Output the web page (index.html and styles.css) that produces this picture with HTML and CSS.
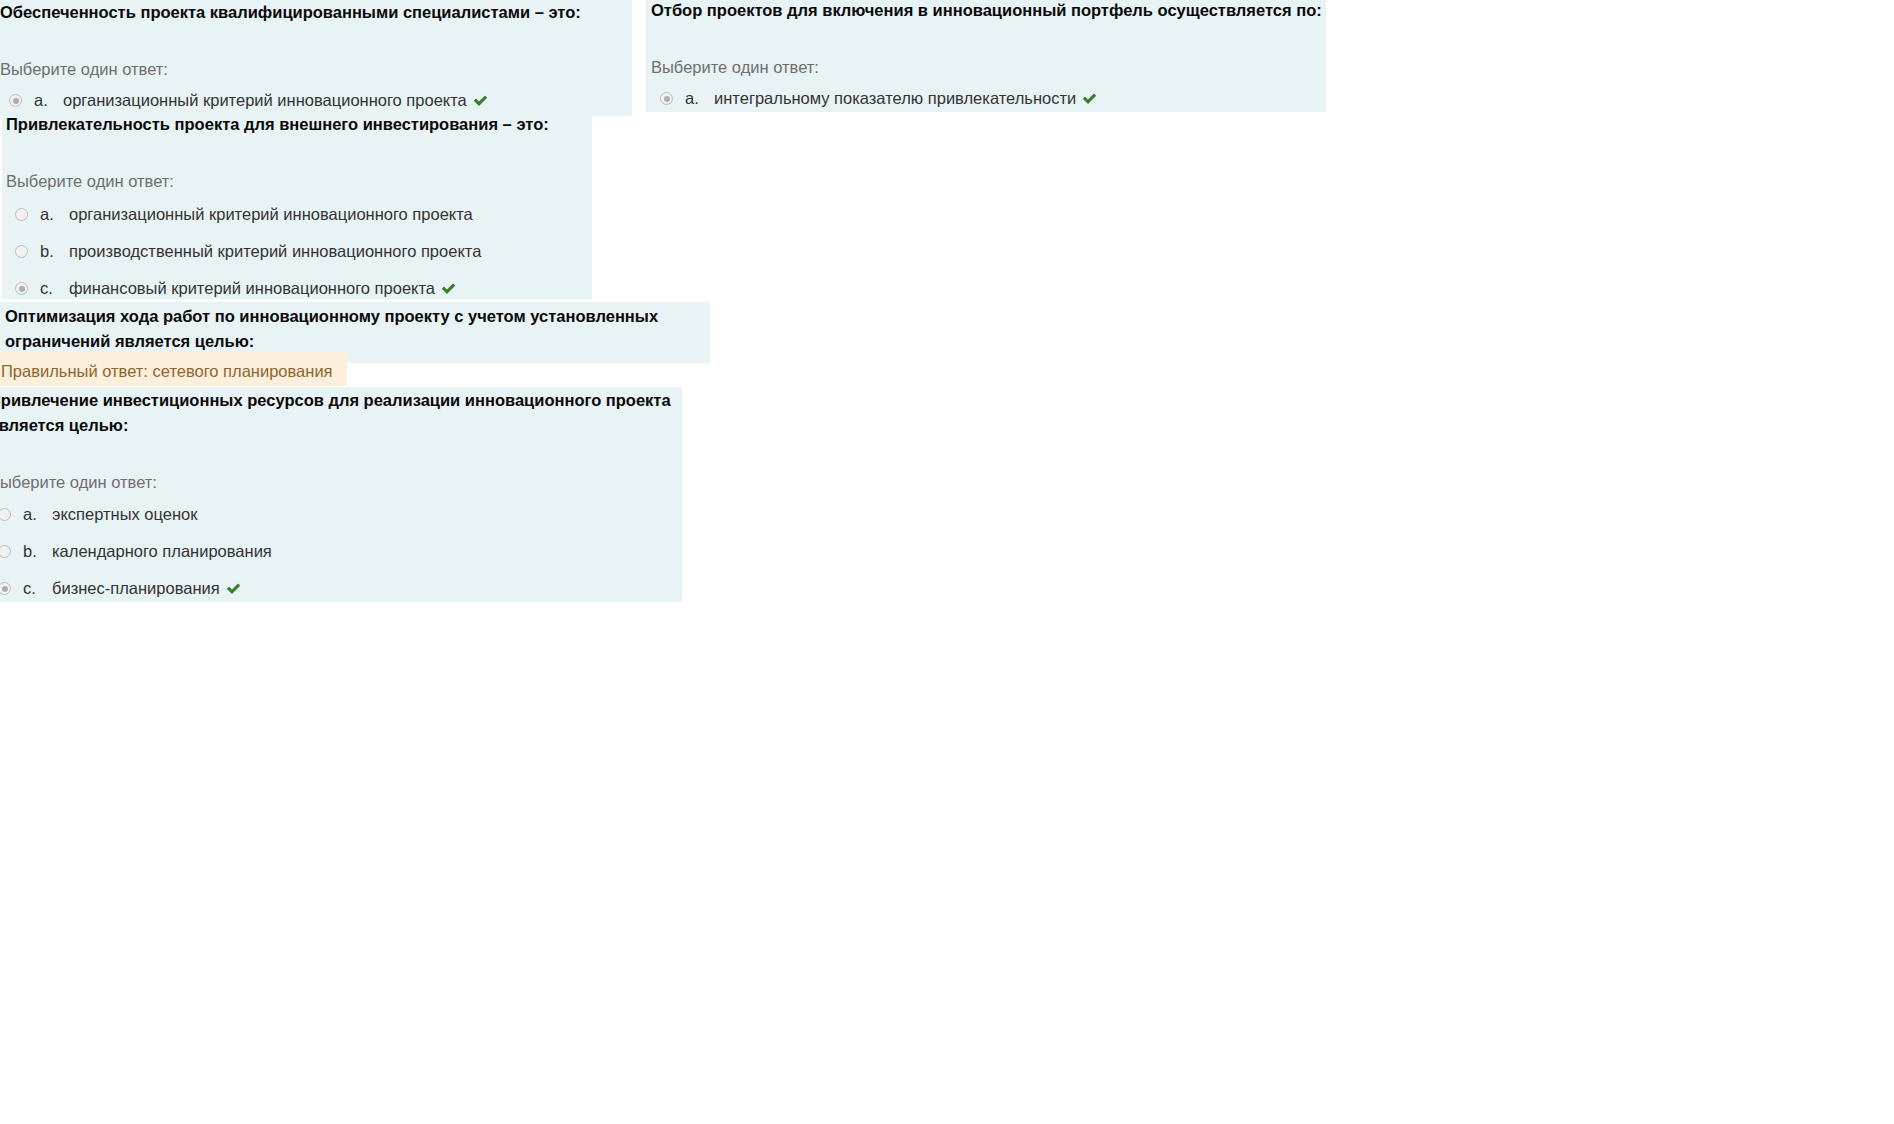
FILE: index.html
```html
<!DOCTYPE html>
<html lang="ru">
<head>
<meta charset="utf-8">
<title>Вопросы</title>
<link rel="stylesheet" href="styles.css">
</head>
<body>
<div class="row-top">
  <section class="q q1">
    <div class="qtext">Обеспеченность проекта квалифицированными специалистами – это:</div>
    <div class="prompt">Выберите один ответ:</div>
    <div class="answer"><span class="radio checked"></span><span class="letter">a.</span><span class="label">организационный критерий инновационного проекта</span><svg class="tick" viewBox="0 0 1792 1792"><path d="M1671 566q0 40-28 68l-724 724-136 136q-28 28-68 28t-68-28l-136-136-362-362q-28-28-28-68t28-68l136-136q28-28 68-28t68 28l294 295 656-657q28-28 68-28t68 28l136 136q28 28 28 68z"/></svg></div>
  </section>
  <section class="q q2">
    <div class="qtext">Отбор проектов для включения в инновационный портфель осуществляется по:</div>
    <div class="prompt">Выберите один ответ:</div>
    <div class="answer"><span class="radio checked"></span><span class="letter">a.</span><span class="label">интегральному показателю привлекательности</span><svg class="tick" viewBox="0 0 1792 1792"><path d="M1671 566q0 40-28 68l-724 724-136 136q-28 28-68 28t-68-28l-136-136-362-362q-28-28-28-68t28-68l136-136q28-28 68-28t68 28l294 295 656-657q28-28 68-28t68 28l136 136q28 28 28 68z"/></svg></div>
  </section>
</div>
<section class="q q3">
  <div class="qtext">Привлекательность проекта для внешнего инвестирования – это:</div>
  <div class="prompt">Выберите один ответ:</div>
  <div class="answer"><span class="radio"></span><span class="letter">a.</span><span class="label">организационный критерий инновационного проекта</span></div>
  <div class="answer"><span class="radio"></span><span class="letter">b.</span><span class="label">производственный критерий инновационного проекта</span></div>
  <div class="answer"><span class="radio checked"></span><span class="letter">c.</span><span class="label">финансовый критерий инновационного проекта</span><svg class="tick" viewBox="0 0 1792 1792"><path d="M1671 566q0 40-28 68l-724 724-136 136q-28 28-68 28t-68-28l-136-136-362-362q-28-28-28-68t28-68l136-136q28-28 68-28t68 28l294 295 656-657q28-28 68-28t68 28l136 136q28 28 28 68z"/></svg></div>
</section>
<section class="q q4">
  <div class="qtext">Оптимизация хода работ по инновационному проекту с учетом установленных<br>ограничений является целью:</div>
</section>
<div class="outcome">Правильный ответ: сетевого планирования</div>
<section class="q q6">
  <div class="shift">
    <div class="qtext">Привлечение инвестиционных ресурсов для реализации инновационного проекта<br>является целью:</div>
    <div class="prompt">Выберите один ответ:</div>
    <div class="answer"><span class="radio"></span><span class="letter">a.</span><span class="label">экспертных оценок</span></div>
    <div class="answer"><span class="radio"></span><span class="letter">b.</span><span class="label">календарного планирования</span></div>
    <div class="answer"><span class="radio checked"></span><span class="letter">c.</span><span class="label">бизнес-планирования</span><svg class="tick" viewBox="0 0 1792 1792"><path d="M1671 566q0 40-28 68l-724 724-136 136q-28 28-68 28t-68-28l-136-136-362-362q-28-28-28-68t28-68l136-136q28-28 68-28t68 28l294 295 656-657q28-28 68-28t68 28l136 136q28 28 28 68z"/></svg></div>
  </div>
</section>
</body>
</html>
```

FILE: styles.css
```css
html, body {
  margin: 0;
  padding: 0;
  background: #ffffff;
}
body {
  font-family: "Liberation Sans", Arial, sans-serif;
  font-size: 16.5px;
  color: #333333;
}
.row-top {
  display: flex;
  align-items: flex-start;
  gap: 14px;
}
.q {
  background: #e7f3f5;
  overflow: hidden;
  box-sizing: border-box;
}
.qtext {
  font-weight: bold;
  color: #0a0a0a;
  line-height: 25px;
  white-space: nowrap;
}
.prompt {
  color: #6f6f6f;
  line-height: 25px;
  margin-top: 32px;
  white-space: nowrap;
}
.answer {
  display: flex;
  align-items: center;
  height: 37px;
  white-space: nowrap;
}
.prompt + .answer {
  margin-top: 1px;
}
.radio {
  width: 11px;
  height: 11px;
  border-radius: 50%;
  border: 1px solid #bdbdbd;
  background: #f1f1f1;
  margin-left: 9px;
  position: relative;
  flex: none;
}
.radio.checked::after {
  content: "";
  position: absolute;
  left: 2.5px;
  top: 2.5px;
  width: 6px;
  height: 6px;
  border-radius: 50%;
  background: #afafaf;
}
.letter {
  margin-left: 12px;
  width: 29px;
}
.tick {
  width: 15px;
  height: 15px;
  fill: #3b7d2f;
  margin-left: 6px;
  flex: none;
}
.q1 {
  width: 632px;
  height: 116px;
  padding-left: 0;
}
.q1 .prompt + .answer { margin-top: 0; }
.q2 {
  width: 680px;
  height: 112px;
  padding-left: 5px;
}
.q2 .qtext { margin-top: -2px; }
.q2 .prompt + .answer { margin-top: 0; }
.q3 {
  width: 590px;
  height: 183px;
  margin-left: 2px;
  padding-left: 4px;
}
.q3 .qtext { margin-top: -4px; }
.q3 .prompt + .answer { margin-top: 2px; }
.q4 {
  width: 710px;
  height: 61px;
  margin-top: 3px;
  padding-left: 5px;
  padding-top: 2px;
}
.outcome {
  width: 347px;
  height: 34px;
  margin-top: -11px;
  box-sizing: border-box;
  background: #fcefdc;
  color: #8e662e;
  line-height: 34px;
  padding-top: 2px;
  padding-left: 1px;
  position: relative;
}
.q6 {
  width: 682px;
  height: 215px;
  margin-top: 1px;
}
.q6 .shift {
  margin-left: -11px;
  margin-top: 1px;
}
```
